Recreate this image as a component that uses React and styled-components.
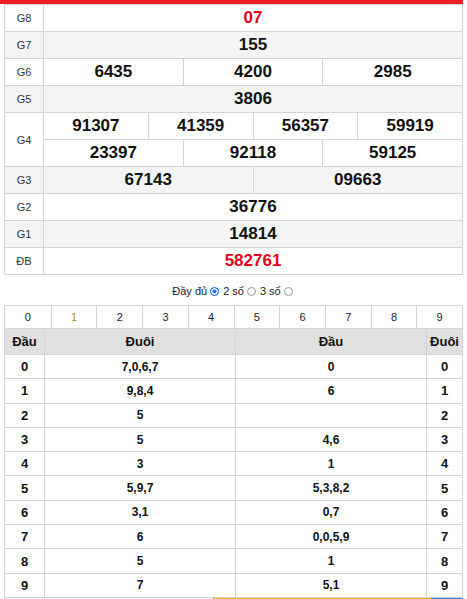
import React from "react";
import styled, { createGlobalStyle } from "styled-components";

const GlobalStyle = createGlobalStyle`
  body {
    margin: 0;
    background: #fff;
    font-family: "Liberation Sans", Arial, sans-serif;
  }
`;

const Page = styled.div`
  width: 467px;
  padding: 0 4px 0 4px;
  box-sizing: border-box;
`;

const TopBar = styled.div`
  height: 4px;
  margin-left: -4px;
  width: 463px;
  background: #ee1c25;
`;

const Board = styled.div`
  border: 1px solid #d4d4d4;
  border-bottom: none;
`;

const PrizeRow = styled.div`
  display: grid;
  grid-template-columns: 39px 1fr;
  background: ${(p) => (p.$alt ? "#f4f4f4" : "#fff")};
  border-bottom: 1px solid #d4d4d4;
`;

const Label = styled.div`
  display: flex;
  align-items: center;
  justify-content: center;
  font-size: 11px;
  color: #333;
  border-right: 1px solid #d4d4d4;
`;

const Values = styled.div`
  display: flex;
  flex-direction: column;
`;

const Line = styled.div`
  display: flex;
  height: 26px;
  & + & {
    border-top: 1px solid #d4d4d4;
  }
`;

const Num = styled.div`
  flex: 1;
  display: flex;
  align-items: center;
  justify-content: center;
  font-size: 17px;
  font-weight: bold;
  color: ${(p) => (p.$red ? "#e3001b" : "#111")};
  & + & {
    border-left: 1px solid #d4d4d4;
  }
`;

const Options = styled.div`
  height: 30px;
  display: flex;
  align-items: center;
  justify-content: center;
  gap: 2px;
  font-size: 11px;
  color: #222;
  padding-top: 2px;
  box-sizing: border-box;
`;

const Radio = styled.span`
  display: inline-block;
  width: 7px;
  height: 7px;
  border-radius: 50%;
  border: 1px solid ${(p) => (p.$on ? "#1a73e8" : "#999")};
  background: ${(p) => (p.$on ? "#1a73e8" : "#fff")};
  box-shadow: ${(p) => (p.$on ? "inset 0 0 0 1.5px #fff" : "none")};
  margin: 0 2px 0 1px;
`;

const DigitBar = styled.div`
  display: grid;
  grid-template-columns: repeat(10, 1fr);
  border: 1px solid #d4d4d4;
  border-bottom: none;
`;

const Digit = styled.div`
  height: 22px;
  display: flex;
  align-items: center;
  justify-content: center;
  font-size: 11px;
  color: ${(p) => p.$color || "#222"};
  & + & {
    border-left: 1px solid #d4d4d4;
  }
`;

const LotoTable = styled.div`
  border: 1px solid #d4d4d4;
  border-top: 1px solid #d4d4d4;
`;

const LotoRow = styled.div`
  display: grid;
  grid-template-columns: 39px 1fr 1fr 36px;
  height: ${(p) => (p.$head ? "25px" : "23.3px")};
  background: ${(p) => (p.$head ? "#e0e0e0" : "#fff")};
  & + & {
    border-top: 1px solid #d4d4d4;
  }
`;

const Cell = styled.div`
  display: flex;
  align-items: center;
  justify-content: center;
  font-size: ${(p) => (p.$head ? "13px" : "12px")};
  font-weight: bold;
  color: #111;
  & + & {
    border-left: 1px solid #d4d4d4;
  }
`;

const Strip = styled.div`
  display: flex;
  height: 3px;
  margin-left: 209px;
`;

const StripPart = styled.div`
  width: ${(p) => p.$w}px;
  background: ${(p) => p.$c};
`;

const prizes = [
  { label: "G8", lines: [["07"]], red: true },
  { label: "G7", lines: [["155"]] },
  { label: "G6", lines: [["6435", "4200", "2985"]] },
  { label: "G5", lines: [["3806"]] },
  { label: "G4", lines: [["91307", "41359", "56357", "59919"], ["23397", "92118", "59125"]] },
  { label: "G3", lines: [["67143", "09663"]] },
  { label: "G2", lines: [["36776"]] },
  { label: "G1", lines: [["14814"]] },
  { label: "ĐB", lines: [["582761"]], red: true },
];

const digitColors = ["#222", "#c08a00", "#1c1c5a", "#2a1a2a", "#222", "#222", "#222", "#222", "#222", "#222"];

const loto = [
  ["7,0,6,7", "0"],
  ["9,8,4", "6"],
  ["5", ""],
  ["5", "4,6"],
  ["3", "1"],
  ["5,9,7", "5,3,8,2"],
  ["3,1", "0,7"],
  ["6", "0,0,5,9"],
  ["5", "1"],
  ["7", "5,1"],
];

export default function App() {
  return (
    <>
      <GlobalStyle />
      <Page>
        <TopBar />
        <Board>
          {prizes.map((p, i) => (
            <PrizeRow key={p.label} $alt={i % 2 === 1}>
              <Label>{p.label}</Label>
              <Values>
                {p.lines.map((line, j) => (
                  <Line key={j}>
                    {line.map((n) => (
                      <Num key={n} $red={p.red}>
                        {n}
                      </Num>
                    ))}
                  </Line>
                ))}
              </Values>
            </PrizeRow>
          ))}
        </Board>
        <Options>
          Đầy đủ <Radio $on /> 2 số <Radio /> 3 số <Radio />
        </Options>
        <DigitBar>
          {digitColors.map((c, i) => (
            <Digit key={i} $color={c}>
              {i}
            </Digit>
          ))}
        </DigitBar>
        <LotoTable>
          <LotoRow $head>
            <Cell $head>Đầu</Cell>
            <Cell $head>Đuôi</Cell>
            <Cell $head>Đầu</Cell>
            <Cell $head>Đuôi</Cell>
          </LotoRow>
          {loto.map((r, i) => (
            <LotoRow key={i}>
              <Cell $head>{i}</Cell>
              <Cell>{r[0]}</Cell>
              <Cell>{r[1]}</Cell>
              <Cell $head>{i}</Cell>
            </LotoRow>
          ))}
        </LotoTable>
        <Strip>
          <StripPart $w={221} $c="#f5a623" />
          <StripPart $w={33} $c="#3b7dd8" />
        </Strip>
      </Page>
    </>
  );
}
